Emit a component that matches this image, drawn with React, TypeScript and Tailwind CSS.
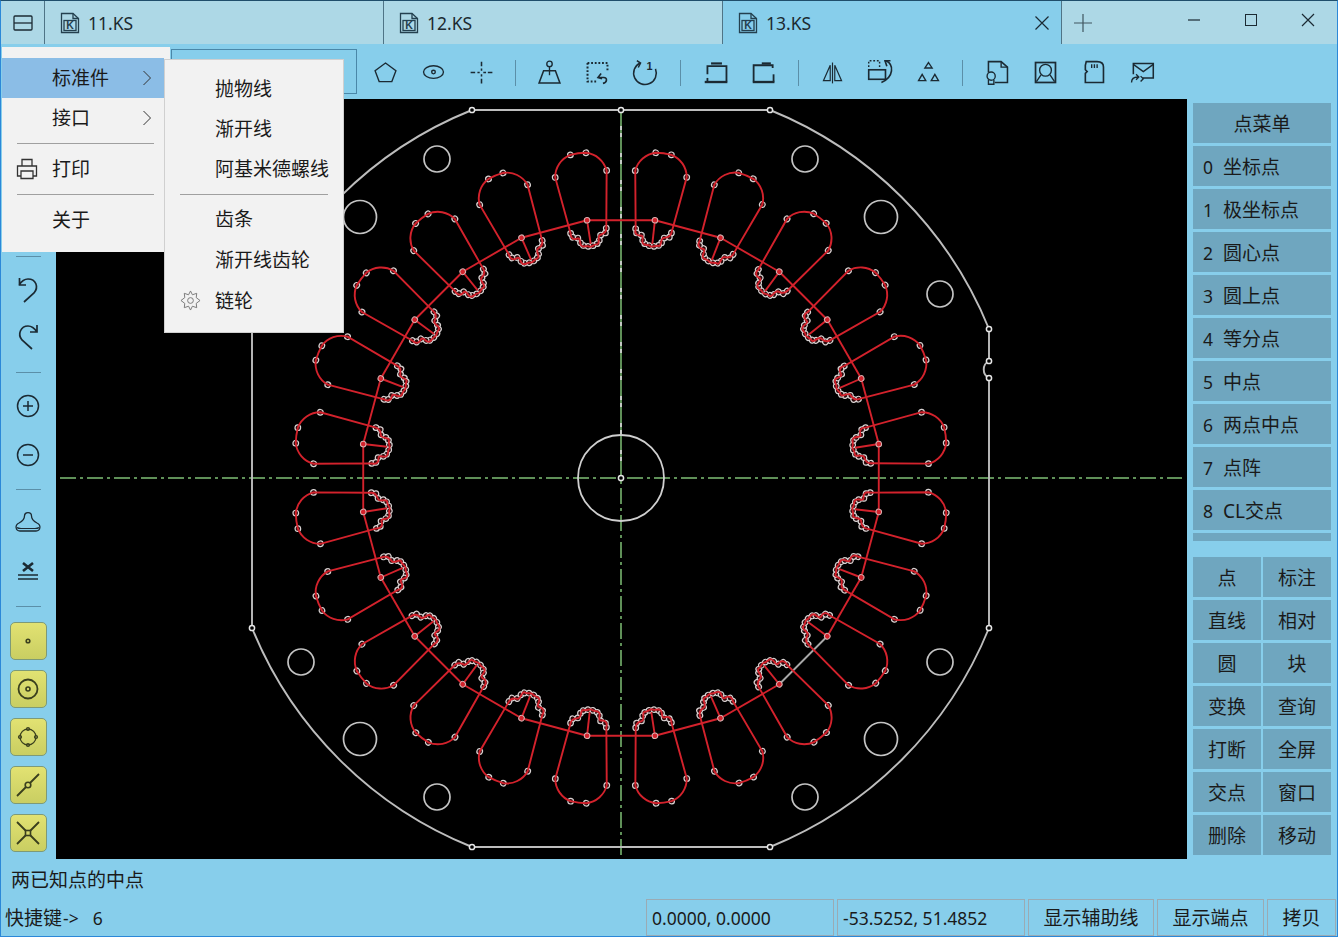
import type { ReactNode } from "react";

const pts = (n: number) => n * (Math.PI / 180);
const angles = Array.from({ length: 24 }, (_, i) => 7.5 + i * 15);

const slotDots: [number, number][] = [
  [306.7, 25.9], [327, 7.7], [327, -8], [306.6, -26], [249, -18], [249.5, 18],
  [245, 16.5], [243.5, 11.5], [238.5, 9.5], [235.5, 7], [234, 2.5], [234, -2.5], [235.5, -7], [238.5, -9.5], [243.5, -11.5], [245, -16.5],
];

const slotPath =
  "M249.5 18 L306.7 25.9 A24 24 0 0 0 327 7.7 A70 70 0 0 0 327 -8 A24 24 0 0 0 306.6 -26 L249 -18 " +
  "C245 -19 242 -16 243 -12.5 C244 -8 238 -11 235.5 -9 C233 -7 235.5 -3 233.5 -1 C232.5 1 235.5 4 235 7 C235 10 240 8 243 10 C245 12 243 17 249.5 18 Z";

const outline =
  "M472 110 L770 110 A397 397 0 0 1 989 329 L989 361 A9.5 9.5 0 0 0 989 378 L989 628 A397 397 0 0 1 770 847 L472 847 A397 397 0 0 1 252 628 L252 329 A397 397 0 0 1 472 110 Z";

const smallHoles = [[437, 159], [805, 159], [940, 294], [940, 662], [805, 797], [437, 797], [301, 662], [301, 294]];
const bigHoles = [[360, 217], [881, 217], [881, 739], [360, 739]];
const nodes = [[472, 110], [621, 110], [770, 110], [989, 329], [989, 361], [989, 378], [989, 628], [770, 847], [472, 847], [252, 628], [252, 329], [621, 478]];

function Drawing() {
  const ring = angles.map((a) => [621 + 260 * Math.cos(pts(a)), 478 + 260 * Math.sin(pts(a))]);
  return (
    <svg viewBox="56 99 1131 760" className="block h-full w-full" fill="none">
      <path d="M621 110V478" stroke="#c4c9c4" strokeWidth="2" />
      <path d="M60 478H1182" stroke="#5f9058" strokeWidth="2" strokeDasharray="16 4 3 4" />
      <path d="M621 110V855" stroke="#5f9058" strokeWidth="2" strokeDasharray="16 4 3 4" />
      <path d={outline} stroke="#bdbdbd" strokeWidth="1.9" />
      <circle cx="621" cy="478" r="43" stroke="#cfcfcf" strokeWidth="1.8" />
      {smallHoles.map(([x, y]) => (
        <circle key={`${x}-${y}`} cx={x} cy={y} r="13" stroke="#c4c4c4" strokeWidth="1.7" />
      ))}
      {bigHoles.map(([x, y]) => (
        <circle key={`${x}-${y}`} cx={x} cy={y} r="16.5" stroke="#c4c4c4" strokeWidth="1.7" />
      ))}
      {ring.map(([x, y], i) => {
        const [nx, ny] = ring[(i + 1) % 24];
        return <path key={i} d={`M${x} ${y}L${nx} ${ny}`} stroke={i === 2 ? "#a8a8a8" : "#d3222c"} strokeWidth="1.9" />;
      })}
      {angles.map((a) => (
        <g key={a} transform={`translate(621 478) rotate(${a})`}>
          {slotDots.map(([u, v]) => (
            <circle key={`${u}-${v}`} cx={u} cy={v} r="2.8" stroke="#d8d2d2" strokeWidth="1.2" fill="#2a0a0c" />
          ))}
          <path d={slotPath} stroke="#d3222c" strokeWidth="1.9" />
          <path d="M260 0L236 0.5" stroke="#d3222c" strokeWidth="1.9" />
          <circle cx="260" cy="0" r="2.8" stroke="#d9b0b0" strokeWidth="1" fill="#d3222c" />
        </g>
      ))}
      {nodes.map(([x, y]) => (
        <circle key={`${x}-${y}`} cx={x} cy={y} r="2.6" stroke="#e6e6e6" strokeWidth="1.5" fill="#000" />
      ))}
    </svg>
  );
}

function Ico({ children, className = "h-8 w-8" }: { children: ReactNode; className?: string }) {
  return (
    <svg viewBox="0 0 32 32" className={className} fill="none" stroke="#1b2a33" strokeWidth="1.5">
      {children}
    </svg>
  );
}

const FileIcon = () => (
  <svg viewBox="0 0 20 22" className="h-[22px] w-[20px] shrink-0" fill="none" stroke="#24404f" strokeWidth="1.3">
    <path d="M1.5 1.5H13L18.5 6.5V20.5H1.5Z" />
    <path d="M13 1.5V6.5H18.5" />
    <rect x="4" y="8.5" width="12" height="10" />
    <text x="10" y="17" textAnchor="middle" fontSize="10.5" fontWeight="700" fill="#24404f" stroke="none" fontFamily="Liberation Sans, sans-serif">K</text>
  </svg>
);

function Tab({ name, active }: { name: string; active?: boolean }) {
  return (
    <div className={`flex h-full w-[339px] items-center border-r border-[#4f7486] pl-[15px] ${active ? "bg-[#87ceeb]" : ""}`}>
      <FileIcon />
      <span className="ml-[8px] pt-[2px] text-[17.5px] leading-none text-[#1c2a30]">{name}</span>
      {active && (
        <svg viewBox="0 0 16 16" className="ml-auto mr-[11px] h-4 w-4" stroke="#1b2a33" strokeWidth="1.2">
          <path d="M1.5 1.5L14.5 14.5M14.5 1.5L1.5 14.5" />
        </svg>
      )}
    </div>
  );
}

const topIcons: ReactNode[][] = [
  [
    <path key="a" d="M16 5.5L27.5 14L23 26H9L4.5 14Z" />,
    <g key="b"><ellipse cx="16" cy="15.5" rx="11" ry="7" /><circle cx="16" cy="15.5" r="2" /></g>,
    <path key="c" d="M4 16H9M11.5 16H14M18 16H21M23 16H28M16 4V9M16 11.5V14M16 18V20.5M16 23V28" strokeWidth="1.7" />,
  ],
  [
    <g key="a"><circle cx="16" cy="6.5" r="3" /><path d="M16 9.5V19" /><path d="M4.5 27.5H27.5L22.5 14H9.5Z" strokeWidth="1.7" /></g>,
    <g key="b"><path d="M5 5.5H27V14M5 5.5V26H15" strokeDasharray="2 2" strokeWidth="2.2" /><path d="M20 17L16.5 21.5L21 23M17 21.5H23C27 21.5 27 27 22 28" strokeWidth="1.8" /></g>,
    <g key="c"><path d="M10 5.5A12.5 12.5 0 1 0 27 12" strokeWidth="1.7" /><path d="M6.5 3L10.5 5.5L8 10.5" strokeWidth="1.7" /><text x="20.5" y="13" fontSize="12" fontWeight="700" fill="#1b2a33" stroke="none" textAnchor="middle" fontFamily="Liberation Sans, sans-serif">1</text></g>,
  ],
  [
    <g key="a" strokeWidth="2"><path d="M6 18V9H27V26" /><path d="M6 22V26" /><path d="M10 6H22" strokeWidth="2.4" /><path d="M3 26.5H28" strokeWidth="2.6" /></g>,
    <g key="b" strokeWidth="2"><path d="M4 26V8H25V11" /><path d="M13 6H23" strokeWidth="2.4" /><path d="M26 18V26" /><path d="M3 26.5H27" strokeWidth="2.6" /></g>,
  ],
  [
    <g key="a" strokeWidth="1.3"><path d="M16 5V28" /><path d="M13.5 8L6 25H13.5ZM18.5 8L26 25H18.5Z" /></g>,
    <g key="b"><path d="M3 10V3H15V10" strokeDasharray="2 2" strokeWidth="1.6" /><rect x="3" y="13" width="18.5" height="10.5" strokeWidth="1.8" /><path d="M22 3C31 7 31 21 17 27" strokeWidth="1.8" /><path d="M20 3H27M21 3L23 9" strokeWidth="1.8" /></g>,
    <path key="c" d="M16 5L20 11H12ZM9 18L13 25H5ZM23 18L27 25H19Z" />,
  ],
  [
    <g key="a"><path d="M6 16V4H20L27 10V27H13" strokeWidth="1.7" /><path d="M20 4V10H27" /><circle cx="9" cy="20" r="4.5" /><path d="M6 24V29H12V24" /></g>,
    <g key="b"><rect x="5" y="5" width="22" height="22" strokeWidth="1.9" /><circle cx="16" cy="13.5" r="6.5" /><path d="M6 26L11 18.5M26 26L21 18.5" /></g>,
    <g key="c"><path d="M8 4H20C25 4 27 6 27 10V27H7V17L9 15L7 13V8Z" strokeWidth="1.8" /><path d="M14 7V11M17 7V11M20 7V11" /></g>,
    <g key="d"><path d="M7 18V6H29V22H17" strokeWidth="1.7" /><path d="M7 7L18 15L29 7" /><path d="M5 27C5 22 8 21 12 21M10 18L13 21L10 24M15 20L18 23L15 26" /></g>,
  ],
];
const sepWidths = ["w-[20px]", "w-[23px]", "w-[20px]", "w-[21px]"];

function Toolbar() {
  return (
    <div className="flex h-[55px] items-center pl-[170px]">
      <div className="h-[45px] w-[186px] border border-[#4a87a8]" />
      <div className="flex items-center pl-[4px] pt-[2px]">
        {topIcons.map((group, g) => (
          <div key={g} className="flex items-center">
            {g > 0 && (
              <div className={`flex justify-center ${sepWidths[g - 1]}`}>
                <div className="h-[26px] w-px bg-[#5b8fa8]" />
              </div>
            )}
            {group.map((icon, i) => (
              <div key={i} className="flex w-12 justify-center">
                <Ico className="h-[29px] w-[29px]">{icon}</Ico>
              </div>
            ))}
          </div>
        ))}
      </div>
    </div>
  );
}

const LeftSep = () => <div className="mx-auto h-px w-[25px] bg-[#5b8fa8]" />;

function YellowBtn({ children }: { children: ReactNode }) {
  return (
    <div className="flex h-[38px] w-[37px] items-center justify-center rounded-[5px] border border-[#7d9a78] bg-gradient-to-b from-[#e2e272] to-[#c9ce62]">
      <svg viewBox="0 0 32 32" className="h-8 w-8" fill="none" stroke="#3a3f1e" strokeWidth="1.6">
        {children}
      </svg>
    </div>
  );
}

function LeftBar() {
  return (
    <div className="flex w-[55px] shrink-0 flex-col items-center pr-[1px] pt-[157px]">
      <LeftSep />
      <div className="mt-[17px]"><Ico><path d="M12 28L22 19C27 13 24 5 16 5C12 5 9 8 7 11M7.5 4V11H14" strokeWidth="1.7" /></Ico></div>
      <div className="mt-[15px]"><Ico><path d="M20 28L10 19C5 13 9 5 16 5C20 5 23 8 25 11M25 4V11H18" strokeWidth="1.7" /></Ico></div>
      <div className="mt-[19px]"><LeftSep /></div>
      <div className="mt-[17px]"><Ico><circle cx="16" cy="16" r="10.5" /><path d="M11 16H21M16 11V21" /></Ico></div>
      <div className="mt-[17px]"><Ico><circle cx="16" cy="16" r="10.5" /><path d="M11 16H21" /></Ico></div>
      <div className="mt-[18px]"><LeftSep /></div>
      <div className="mt-[17px]"><Ico><path d="M12.5 9C12.5 4.5 19.5 4.5 19.5 9C19.5 12 21 14 25 16C29.5 18 28.5 24 24 24H8C3.5 24 2.5 18 7 16C11 14 12.5 12 12.5 9Z" strokeWidth="1.3" /><path d="M5 20.5C6 21.5 8 21.5 9 21.5H23C24 21.5 26 21.5 27 20.5" strokeWidth="1.2" /></Ico></div>
      <div className="mt-[16px]"><Ico><path d="M11 8L21 16M21 8L11 16" strokeWidth="2.6" /><path d="M6 20H26M6 24H26" strokeWidth="1.7" /></Ico></div>
      <div className="mt-[19px]"><LeftSep /></div>
      <div className="mt-[15px] flex flex-col gap-[10px]">
        <YellowBtn><circle cx="16" cy="16" r="1.8" /></YellowBtn>
        <YellowBtn><circle cx="16" cy="16" r="9.5" strokeWidth="1.8" /><circle cx="16" cy="16" r="2" /></YellowBtn>
        <YellowBtn><circle cx="16" cy="16" r="8" strokeWidth="1.3" /><circle cx="16" cy="8" r="1.5" strokeWidth="1.2" /><circle cx="24" cy="16" r="1.5" strokeWidth="1.2" /><circle cx="16" cy="24" r="1.5" strokeWidth="1.2" /><circle cx="8" cy="16" r="1.5" strokeWidth="1.2" /></YellowBtn>
        <YellowBtn><path d="M5 27L14 18M18 14L27 5" strokeWidth="1.8" /><circle cx="16" cy="16" r="2.8" /></YellowBtn>
        <YellowBtn><path d="M5 5L14 14M18 18L27 27M27 5L18 14M14 18L5 27" strokeWidth="1.8" /><rect x="13.5" y="13.5" width="5" height="5" /></YellowBtn>
      </div>
    </div>
  );
}

const pointItems = [
  ["0", "坐标点"], ["1", "极坐标点"], ["2", "圆心点"], ["3", "圆上点"], ["4", "等分点"],
  ["5", "中点"], ["6", "两点中点"], ["7", "点阵"], ["8", "CL交点"],
];
const grid = ["点", "标注", "直线", "相对", "圆", "块", "变换", "查询", "打断", "全屏", "交点", "窗口", "删除", "移动"];

function RightPanel() {
  return (
    <div className="w-[150px] shrink-0 pl-[6px] pt-[4px]">
      <div className="flex w-[138px] flex-col gap-[3px]">
        <div className="flex h-[40px] items-center justify-center bg-[#6fa6bf] pt-[3px] text-[19px]">点菜单</div>
        {pointItems.map(([n, t]) => (
          <div key={n} className="flex h-[40px] items-center bg-[#6fa6bf] pl-[10px] pt-[2px] text-[19px]">
            <span className="w-[20px] text-[17.5px]">{n}</span>
            {t}
          </div>
        ))}
        <div className="h-[8px] bg-[#6fa6bf]" />
      </div>
      <div className="mt-[16px] grid w-[138px] grid-cols-2 gap-x-[2px] gap-y-[3px]">
        {grid.map((t) => (
          <div key={t} className="flex h-[40px] items-center justify-center bg-[#6fa6bf] pt-[2px] text-[19px]">{t}</div>
        ))}
      </div>
    </div>
  );
}

function StatusBox({ w, center, children }: { w: string; center?: boolean; children: ReactNode }) {
  return (
    <div className={`flex h-[37px] shrink-0 items-center border border-[#9aabb4] pt-[2px] ${w} ${center ? "justify-center text-[19px]" : "pl-[5px] text-[17.5px]"}`}>
      {children}
    </div>
  );
}

function MenuRow({ label, active, chevron, icon }: { label: string; active?: boolean; chevron?: boolean; icon?: ReactNode }) {
  return (
    <div className={`relative flex h-[40px] items-center pl-[50px] text-[19px] ${active ? "bg-[#8bbde6]" : ""}`}>
      {icon && <span className="absolute left-[14px] top-[9px]">{icon}</span>}
      {label}
      {chevron && (
        <svg viewBox="0 0 10 16" className="absolute left-[140px] top-[12px] h-4 w-[10px]" fill="none" stroke="#333" strokeWidth="1">
          <path d="M1.5 1L8.5 8L1.5 15" />
        </svg>
      )}
    </div>
  );
}

function MainMenu() {
  return (
    <div className="absolute left-[1px] top-[46px] z-10 h-[205px] w-[168px] bg-[#f2f2f2] pt-[11px]">
      <div className="w-[162px]">
        <MenuRow label="标准件" active chevron />
        <MenuRow label="接口" chevron />
        <div className="my-[5px] ml-[15px] mr-[10px] h-px bg-[#a0a0a0]" />
        <MenuRow
          label="打印"
          icon={
            <svg viewBox="0 0 22 22" className="h-[22px] w-[22px]" fill="none" stroke="#333" strokeWidth="1.3">
              <path d="M6 8V1.5H16V8M5 18H1.5V8H20.5V18H17M5 13H17V20.5H5Z" />
            </svg>
          }
        />
        <div className="my-[5px] ml-[15px] mr-[10px] h-px bg-[#a0a0a0]" />
        <MenuRow label="关于" />
      </div>
    </div>
  );
}

function SubMenu() {
  const row = "flex h-[40px] items-center pl-[50px] text-[19px]";
  return (
    <div className="absolute left-[163px] top-[58px] z-20 h-[274px] w-[180px] border border-[#d0d0d0] bg-[#f2f2f2] pt-[9px]">
      <div className={row}>抛物线</div>
      <div className={row}>渐开线</div>
      <div className={row}>阿基米德螺线</div>
      <div className="mb-[4px] ml-[15px] mr-[15px] mt-[5px] h-px bg-[#a0a0a0]" />
      <div className={row}>齿条</div>
      <div className={`${row} mt-px`}>渐开线齿轮</div>
      <div className={`${row} relative mt-px`}>
        <svg viewBox="0 0 22 22" className="absolute left-[15px] top-[9px] h-[21px] w-[21px]" fill="none" stroke="#777" strokeWidth="1">
          <path d="M11 1L13 5L17.5 3.5L17 8L21 11L17 14L17.5 18.5L13 17L11 21L9 17L4.5 18.5L5 14L1 11L5 8L4.5 3.5L9 5Z" />
          <circle cx="11" cy="11" r="3" />
        </svg>
        链轮
      </div>
    </div>
  );
}

export default function App() {
  return (
    <div className="relative flex h-[937px] w-[1338px] flex-col overflow-hidden border border-[#2b88d8] border-t-[#1f4e6b] bg-[#87ceeb] font-['Noto_Sans','Noto_Sans_CJK_SC',sans-serif] text-[#1a1a1a]">
      <div className="flex h-[43px] shrink-0 bg-[#add8e6]">
        <div className="flex h-full w-[44px] items-center justify-center border-r border-[#4f7486]">
          <svg viewBox="0 0 20 16" className="h-4 w-5" fill="none" stroke="#1b2a33" strokeWidth="1.3">
            <rect x="1" y="1" width="18" height="14" rx="1" />
            <path d="M1 8H19" />
          </svg>
        </div>
        <Tab name="11.KS" />
        <Tab name="12.KS" />
        <Tab name="13.KS" active />
        <div className="flex flex-1 items-center">
          <svg viewBox="0 0 20 20" className="ml-[11px] h-5 w-5" stroke="#40555f" strokeWidth="1.2">
            <path d="M1 10H19M10 1V19" />
          </svg>
          <svg viewBox="0 0 14 14" className="mb-[6px] ml-[94px] h-[14px] w-[14px]" stroke="#1b2a33" strokeWidth="1.2">
            <path d="M1 7H13" />
          </svg>
          <div className="mb-[6px] ml-[44px] h-3 w-3 border border-[#1b2a33]" />
          <svg viewBox="0 0 14 14" className="mb-[6px] ml-[44px] h-[14px] w-[14px]" stroke="#1b2a33" strokeWidth="1.2">
            <path d="M1 1L13 13M13 1L1 13" />
          </svg>
        </div>
      </div>
      <Toolbar />
      <div className="flex h-[760px] shrink-0">
        <LeftBar />
        <div className="h-full w-[1131px] shrink-0 bg-black">
          <Drawing />
        </div>
        <RightPanel />
      </div>
      <div className="flex h-[40px] shrink-0 items-center pl-[10px] pt-[2px] text-[19px]">两已知点的中点</div>
      <div className="flex h-[37px] shrink-0 items-center text-[19px]">
        <div className="flex w-[645px] items-center pl-[4px] pt-[2px]">
          快捷键<span className="ml-px text-[17.5px]">-&gt;</span>
          <span className="ml-[14px] text-[17.5px]">6</span>
        </div>
        <div className="flex gap-[3px]">
          <StatusBox w="w-[188px]">0.0000, 0.0000</StatusBox>
          <StatusBox w="w-[188px]">-53.5252, 51.4852</StatusBox>
          <StatusBox w="w-[126px]" center>显示辅助线</StatusBox>
          <StatusBox w="w-[107px]" center>显示端点</StatusBox>
          <StatusBox w="w-[69px]" center>拷贝</StatusBox>
        </div>
      </div>
      <MainMenu />
      <SubMenu />
    </div>
  );
}
